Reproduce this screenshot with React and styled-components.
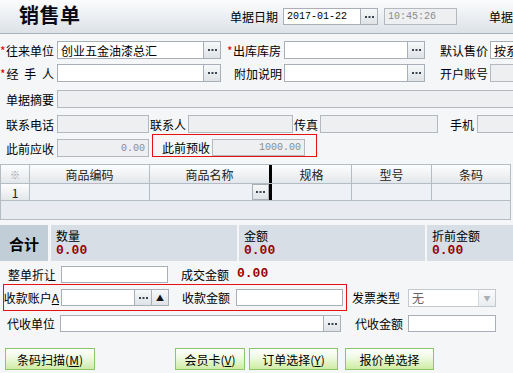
import styled, { createGlobalStyle } from "styled-components";

const GlobalStyle = createGlobalStyle`
  html, body {
    margin: 0;
    padding: 0;
    background: #f4f6f8;
    overflow: hidden;
  }
  body {
    font-family: "Noto Sans CJK SC", "Liberation Sans", sans-serif;
    font-size: 12px;
    color: #000;
  }
`;

const Page = styled.div`
  width: 513px;
  height: 373px;
  overflow: hidden;
  background: #f4f6f8;
`;

const Header = styled.div`
  height: 33px;
  display: flex;
  align-items: center;
  background: linear-gradient(#fbfcfd, #dde2e7);
  border-bottom: 1px solid #a7b5c1;
  white-space: nowrap;
  & > * {
    flex-shrink: 0;
  }
`;

const Title = styled.h1`
  margin: -4px 0 0 19px;
  width: 208px;
  font-size: 20px;
  font-weight: 700;
  letter-spacing: 0.5px;
  color: #0b0b18;
`;

const Row = styled.div`
  display: flex;
  align-items: ${(p) => p.$align || "center"};
  height: ${(p) => p.$h || 18}px;
  margin-top: ${(p) => p.$mt || 0}px;
  white-space: nowrap;
`;

const Label = styled.span`
  flex-shrink: 0;
  width: ${(p) => p.$w}px;
  display: flex;
  justify-content: flex-end;
  align-items: center;
  padding-right: ${(p) => (p.$pr === undefined ? 3 : p.$pr)}px;
  box-sizing: border-box;
  word-spacing: 3px;
`;

const Star = styled.span`
  color: #e00000;
  margin-right: auto;
`;

const Key = styled.span`
  text-decoration: underline;
`;

const Field = styled.div`
  flex-shrink: 0;
  width: ${(p) => p.$w}px;
  height: ${(p) => p.$h || 18}px;
  box-sizing: border-box;
  border: 1px solid ${(p) => (p.$off ? "#b3b9bf" : "#a8afb6")};
  background: ${(p) => (p.$off ? "#eeeff1" : "#fff")};
  color: ${(p) => (p.$off ? "#8c8c8c" : "#000")};
  display: flex;
  align-items: center;
  justify-content: ${(p) => (p.$right ? "flex-end" : "flex-start")};
  padding: 0 3px;
  overflow: hidden;
  font-family: ${(p) => (p.$mono ? '"Liberation Mono", monospace' : "inherit")};
  font-size: ${(p) => (p.$mono ? "10px" : "12px")};
`;

const DotBtn = styled.div`
  flex-shrink: 0;
  width: 17px;
  height: ${(p) => p.$h || 18}px;
  box-sizing: border-box;
  border: 1px solid #a8afb6;
  border-left: ${(p) => (p.$joined ? "none" : "1px solid #a8afb6")};
  background: linear-gradient(#f7f8f9, #dfe3e7);
  display: flex;
  align-items: center;
  justify-content: center;
  color: #111;
  font-size: 8px;
  line-height: 1;
`;

const Dots = () => (
  <svg width="9" height="2" viewBox="0 0 9 2">
    <rect x="0" y="0" width="2" height="2" fill="#3a4550" />
    <rect x="3.5" y="0" width="2" height="2" fill="#3a4550" />
    <rect x="7" y="0" width="2" height="2" fill="#3a4550" />
  </svg>
);

const Highlight = styled.div`
  flex-shrink: 0;
  display: flex;
  align-items: ${(p) => p.$align || "center"};
  width: ${(p) => p.$w}px;
  height: ${(p) => p.$h}px;
  margin-left: ${(p) => p.$ml || 0}px;
  box-sizing: border-box;
  border: 1px solid #e81010;
`;

const Select = styled.div`
  flex-shrink: 0;
  width: ${(p) => p.$w}px;
  height: 18px;
  box-sizing: border-box;
  border: 1px solid #c3c9cf;
  background: #fff;
  display: flex;
  align-items: center;
  color: #666;
`;

const SelectText = styled.span`
  flex: 1;
  padding-left: 3px;
`;

const SelectArrow = styled.span`
  width: 16px;
  height: 100%;
  border-left: 1px solid #d3d8dc;
  background: linear-gradient(#fbfbfc, #e9ecef);
  display: flex;
  align-items: center;
  justify-content: center;
  color: #a9afb5;
  font-size: 7px;
`;

const Grid = styled.div`
  margin-top: 7px;
  width: 511px;
  box-sizing: border-box;
  border: 1px solid #b4bcc4;
  background: #e8ecf0;
`;

const GridRow = styled.div`
  display: grid;
  grid-template-columns: 29px 120px 122px 80px 80px 1fr;
  height: ${(p) => p.$h}px;
  border-bottom: 1px solid #b4bcc4;
  background: ${(p) => (p.$head ? "linear-gradient(#fdfdfe, #e3e7eb)" : "#eef2f6")};
`;

const Cell = styled.div`
  border-right: ${(p) => (p.$bar ? "3px solid #000" : "1px solid #b4bcc4")};
  display: flex;
  align-items: center;
  justify-content: ${(p) => (p.$end ? "flex-end" : "center")};
  color: ${(p) => (p.$dim ? "#9aa1a8" : "#222")};
  font-size: ${(p) => (p.$dim ? "10px" : "12px")};
  background: ${(p) => (p.$rowHead ? "linear-gradient(#fdfdfe, #e3e7eb)" : "transparent")};
  overflow: hidden;
  &:last-child {
    border-right: none;
  }
`;

const GridEmpty = styled.div`
  height: 18px;
`;

const Totals = styled.div`
  display: flex;
  height: 36px;
  margin-top: 5px;
`;

const TotalHead = styled.div`
  width: 48px;
  background: #c1ced8;
  display: flex;
  align-items: center;
  justify-content: center;
  font-size: 15px;
  font-weight: 700;
`;

const TotalBox = styled.div`
  width: ${(p) => (p.$w ? `${p.$w}px` : "auto")};
  flex: ${(p) => (p.$w ? "none" : 1)};
  margin-left: ${(p) => p.$ml}px;
  background: #d7dee6;
  padding: 4px 0 0 5px;
  box-sizing: border-box;
  line-height: 14px;
`;

const Money = styled.div`
  font-family: "Liberation Mono", monospace;
  font-size: 13px;
  font-weight: 700;
  color: #9a0000;
  margin-top: 1px;
`;

const InlineMoney = styled(Money)`
  margin: 0 0 3px 7px;
`;

const Buttons = styled.div`
  display: flex;
  height: 22px;
  margin-top: 16px;
`;

const GreenButton = styled.button`
  width: ${(p) => p.$w}px;
  margin-left: ${(p) => p.$ml}px;
  height: 22px;
  padding: 0;
  border: 1px solid #8cc66a;
  background: linear-gradient(#ffffff 0%, #eef9df 45%, #cdeca4 100%);
  font-family: "Noto Sans CJK SC", sans-serif;
  font-size: 12px;
  color: #000;
  white-space: nowrap;
`;

const App = () => {
  return (
    <Page>
      <GlobalStyle />
      <Header>
        <Title>销售单</Title>
        <Label $w={56} $pr={5}>单据日期</Label>
        <Field $w={78} $mono $h={17}>2017-01-22</Field>
        <DotBtn $joined $h={17}><Dots /></DotBtn>
        <Field $w={73} $off $mono $h={17} style={{ marginLeft: 6 }}>10:45:26</Field>
        <Label $w={80} $pr={0}>单据编号</Label>
      </Header>

      <Row $mt={7}>
        <Label $w={57}><Star>*</Star>往来单位</Label>
        <Field $w={147}>创业五金油漆总汇</Field>
        <DotBtn $joined><Dots /></DotBtn>
        <Label $w={63}><Star style={{ marginLeft: 6 }}>*</Star>出库库房</Label>
        <Field $w={124} />
        <DotBtn $joined><Dots /></DotBtn>
        <Label $w={65} $pr={2}>默认售价</Label>
        <Field $w={60}>按系统设置</Field>
      </Row>

      <Row $mt={5}>
        <Label $w={57}><Star>*</Star>经 手 人</Label>
        <Field $w={147} />
        <DotBtn $joined><Dots /></DotBtn>
        <Label $w={63} $pr={2}>附加说明</Label>
        <Field $w={124} />
        <DotBtn $joined><Dots /></DotBtn>
        <Label $w={65} $pr={2}>开户账号</Label>
        <Field $w={60} $off />
      </Row>

      <Row $mt={8}>
        <Label $w={57}>单据摘要</Label>
        <Field $w={470} $off />
      </Row>

      <Row $mt={7}>
        <Label $w={57}>联系电话</Label>
        <Field $w={92} $off />
        <Label $w={39} $pr={2}>联系人</Label>
        <Field $w={105} $off />
        <Label $w={27} $pr={2}>传真</Label>
        <Field $w={118} $off />
        <Label $w={39} $pr={3}>手机</Label>
        <Field $w={50} $off />
      </Row>

      <Row $mt={1} $h={23} $align="flex-end">
        <Label $w={57} style={{ height: 18 }}>此前应收</Label>
        <Field $w={92} $off $right $mono>0.00</Field>
        <Highlight $w={165} $h={23} $ml={3} $align="flex-end">
          <Label $w={59} $pr={2} style={{ height: 17 }}>此前预收</Label>
          <Field $w={93} $h={17} $off $right $mono>1000.00</Field>
        </Highlight>
      </Row>

      <Grid>
        <GridRow $head $h={18}>
          <Cell $dim>※</Cell>
          <Cell>商品编码</Cell>
          <Cell $bar>商品名称</Cell>
          <Cell>规格</Cell>
          <Cell>型号</Cell>
          <Cell>条码</Cell>
        </GridRow>
        <GridRow $h={16}>
          <Cell $rowHead>1</Cell>
          <Cell />
          <Cell $bar $end>
            <DotBtn $h={16}><Dots /></DotBtn>
          </Cell>
          <Cell />
          <Cell />
          <Cell />
        </GridRow>
        <GridEmpty />
      </Grid>

      <Totals>
        <TotalHead>合计</TotalHead>
        <TotalBox $w={186} $ml={3}>
          数量
          <Money>0.00</Money>
        </TotalBox>
        <TotalBox $w={186} $ml={2}>
          金额
          <Money>0.00</Money>
        </TotalBox>
        <TotalBox $ml={2}>
          折前金额
          <Money>0.00</Money>
        </TotalBox>
      </Totals>

      <Row $mt={5} $h={17}>
        <Label $w={61} $pr={5}>整单折让</Label>
        <Field $w={107} $h={17} />
        <Label $w={62} $pr={1}>成交金额</Label>
        <InlineMoney>0.00</InlineMoney>
      </Row>

      <Row $mt={1} $h={27}>
        <Highlight $w={344} $h={27} $ml={3}>
          <Label $w={57} $pr={2}>收款账户<Key>A</Key></Label>
          <Field $w={74} $h={17} />
          <DotBtn $joined $h={17}><Dots /></DotBtn>
          <DotBtn $joined $h={17}>▲</DotBtn>
          <Label $w={67} $pr={6}>收款金额</Label>
          <Field $w={107} $h={17} />
        </Highlight>
        <Label $w={61} $pr={8}>发票类型</Label>
        <Select $w={88}>
          <SelectText>无</SelectText>
          <SelectArrow>▼</SelectArrow>
        </Select>
      </Row>

      <Row $mt={4} $h={17}>
        <Label $w={60} $pr={5}>代收单位</Label>
        <Field $w={264} $h={17} />
        <DotBtn $joined $h={17}><Dots /></DotBtn>
        <Label $w={67} $pr={5}>代收金额</Label>
        <Field $w={88} $h={17} />
      </Row>

      <Buttons>
        <GreenButton $w={90} $ml={5}>条码扫描(<Key>M</Key>)</GreenButton>
        <GreenButton $w={70} $ml={80}>会员卡(<Key>V</Key>)</GreenButton>
        <GreenButton $w={89} $ml={4}>订单选择(<Key>Y</Key>)</GreenButton>
        <GreenButton $w={89} $ml={7}>报价单选择</GreenButton>
      </Buttons>
    </Page>
  );
};

export default App;
